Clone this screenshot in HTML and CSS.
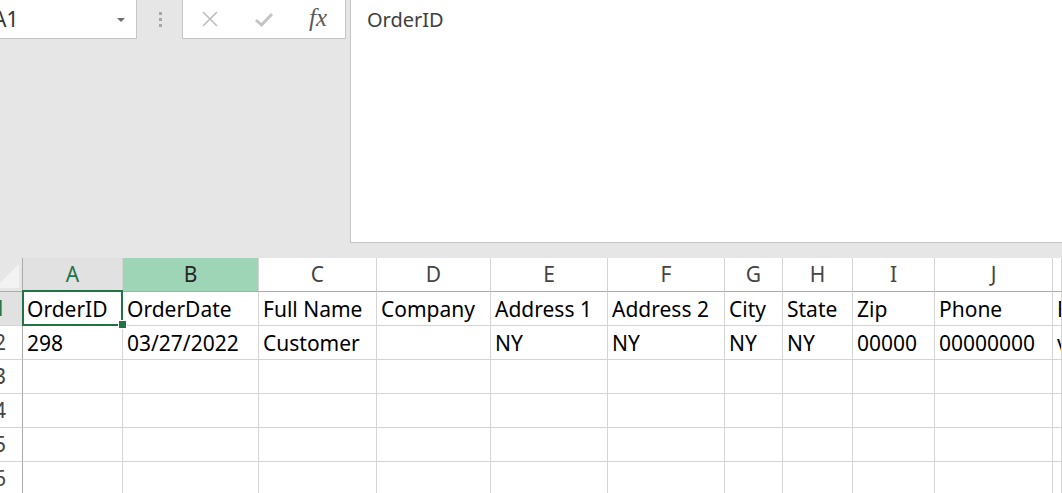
FILE: index.html
```html
<!DOCTYPE html>
<html>
<head>
<meta charset="utf-8">
<link rel="stylesheet" href="styles.css">
</head>
<body>
<div class="app">
  <div class="topbar">
    <div class="namebox">
      <span class="ref">A1</span>
      <span class="dd"></span>
    </div>
    <div class="grip"><i></i><i></i><i></i></div>
    <div class="fbtns">
      <svg class="ico" width="20" height="20" viewBox="0 0 20 20"><path d="M3 3 L17 17 M17 3 L3 17" stroke="#bdbdbd" stroke-width="1.6" fill="none"/></svg>
      <svg class="ico" width="20" height="20" viewBox="0 0 20 20"><path d="M2 11 L7.5 16 L18 5" stroke="#c4c4c4" stroke-width="3" fill="none"/></svg>
      <span class="fx">fx</span>
    </div>
    <div class="fbar">OrderID</div>
  </div>
  <div class="sheet">
    <div class="corner"><span class="tri"></span></div>
    <div class="ch sel">A</div>
    <div class="ch hov">B</div>
    <div class="ch">C</div>
    <div class="ch">D</div>
    <div class="ch">E</div>
    <div class="ch">F</div>
    <div class="ch">G</div>
    <div class="ch">H</div>
    <div class="ch">I</div>
    <div class="ch">J</div>
    <div class="ch"></div>

    <div class="rh sel"><span>1</span></div>
    <div class="c active">OrderID</div>
    <div class="c">OrderDate</div>
    <div class="c">Full Name</div>
    <div class="c">Company</div>
    <div class="c">Address 1</div>
    <div class="c">Address 2</div>
    <div class="c">City</div>
    <div class="c">State</div>
    <div class="c">Zip</div>
    <div class="c">Phone</div>
    <div class="c">Email</div>

    <div class="rh"><span>2</span></div>
    <div class="c">298</div>
    <div class="c">03/27/2022</div>
    <div class="c">Customer</div>
    <div class="c"></div>
    <div class="c">NY</div>
    <div class="c">NY</div>
    <div class="c">NY</div>
    <div class="c">NY</div>
    <div class="c">00000</div>
    <div class="c">00000000</div>
    <div class="c">v</div>

    <div class="rh"><span>3</span></div>
    <div class="c"></div><div class="c"></div><div class="c"></div><div class="c"></div><div class="c"></div><div class="c"></div><div class="c"></div><div class="c"></div><div class="c"></div><div class="c"></div><div class="c"></div>

    <div class="rh"><span>4</span></div>
    <div class="c"></div><div class="c"></div><div class="c"></div><div class="c"></div><div class="c"></div><div class="c"></div><div class="c"></div><div class="c"></div><div class="c"></div><div class="c"></div><div class="c"></div>

    <div class="rh"><span>5</span></div>
    <div class="c"></div><div class="c"></div><div class="c"></div><div class="c"></div><div class="c"></div><div class="c"></div><div class="c"></div><div class="c"></div><div class="c"></div><div class="c"></div><div class="c"></div>

    <div class="rh"><span>6</span></div>
    <div class="c"></div><div class="c"></div><div class="c"></div><div class="c"></div><div class="c"></div><div class="c"></div><div class="c"></div><div class="c"></div><div class="c"></div><div class="c"></div><div class="c"></div>
  </div>
</div>
</body>
</html>
```

FILE: styles.css
```css
* { box-sizing: border-box; }
html, body { margin: 0; padding: 0; }
body {
  width: 1062px;
  height: 493px;
  overflow: hidden;
  background: #ffffff;
  font-family: "Noto Sans", "Noto Sans CJK KR", sans-serif;
}
.app { width: 1062px; height: 493px; overflow: hidden; }

.topbar {
  height: 258px;
  background: #e6e6e6;
  display: flex;
  align-items: flex-start;
}
.namebox {
  width: 137px;
  height: 39px;
  background: #ffffff;
  border-right: 1px solid #c6c6c6;
  border-bottom: 1px solid #c6c6c6;
  display: flex;
  align-items: center;
  justify-content: space-between;
  padding-right: 11px;
}
.ref {
  margin-left: -7px;
  font-size: 21px;
  color: #333333;
  line-height: 38px;
}
.dd {
  width: 0; height: 0;
  border-left: 4px solid transparent;
  border-right: 4px solid transparent;
  border-top: 4px solid #6e6e6e;
  margin-top: 2px;
}
.grip {
  width: 45px;
  height: 39px;
  display: flex;
  flex-direction: column;
  align-items: center;
  justify-content: center;
  gap: 3px;
  padding-left: 1px;
}
.grip i {
  display: block;
  width: 3px;
  height: 3px;
  background: #a6a6a6;
}
.fbtns {
  width: 164px;
  height: 39px;
  background: #ffffff;
  border-left: 1px solid #c6c6c6;
  border-right: 1px solid #c6c6c6;
  border-bottom: 1px solid #c6c6c6;
  display: flex;
  align-items: center;
  padding-left: 17px;
  gap: 34px;
}
.ico { display: block; flex: none; }
.fx {
  font-family: "Liberation Serif", "DejaVu Serif", serif;
  font-style: italic;
  font-size: 25px;
  line-height: 30px;
  color: #5a5a5a;
  margin-left: 1px;
  margin-top: -2px;
}
.fbar {
  margin-left: 4px;
  flex: 1;
  height: 243px;
  background: #ffffff;
  border-left: 1px solid #c6c6c6;
  border-bottom: 1px solid #c6c6c6;
  padding-left: 16px;
  font-size: 20px;
  line-height: 39px;
  color: #404040;
}

.sheet {
  display: grid;
  grid-template-columns: 23px 100px 136px 118px 114px 117px 117px 58px 70px 82px 118px 1fr;
  grid-auto-rows: 34px;
}
.corner {
  background: #e6e6e6;
  border-right: 1px solid #ababab;
  border-bottom: 1px solid #ababab;
  position: relative;
  overflow: hidden;
}
.tri {
  position: absolute;
  right: 3px;
  bottom: 3px;
  width: 0; height: 0;
  border-left: 24px solid transparent;
  border-bottom: 24px solid #f3f3f3;
}
.ch {
  background: #ffffff;
  border-right: 1px solid #d4d4d4;
  border-bottom: 1px solid #ababab;
  text-align: center;
  font-size: 21px;
  line-height: 33px;
  color: #444444;
}
.ch.sel { background: #e1e1e1; color: #217346; }
.ch.hov { background: #9fd5b7; color: #262626; }
.rh {
  background: #ffffff;
  border-right: 1px solid #ababab;
  border-bottom: 1px solid #d4d4d4;
  display: flex;
  justify-content: flex-end;
  padding-right: 16px;
  font-size: 21px;
  line-height: 33px;
  color: #444444;
  overflow: hidden;
}
.rh span { white-space: nowrap; }
.rh.sel { background: #e1e1e1; color: #217346; }
.c {
  border-right: 1px solid #d4d4d4;
  border-bottom: 1px solid #d4d4d4;
  padding-left: 4px;
  font-size: 21px;
  line-height: 34px;
  color: #000000;
  white-space: nowrap;
  overflow: hidden;
}
.c.active {
  position: relative;
  overflow: visible;
}
.c.active::before {
  content: "";
  position: absolute;
  left: -1px;
  top: -2px;
  right: -1px;
  bottom: -1px;
  border: 2px solid #217346;
  z-index: 2;
}
.c.active::after {
  content: "";
  position: absolute;
  right: -5px;
  bottom: -4px;
  width: 7px;
  height: 7px;
  background: #217346;
  border: 1px solid #ffffff;
  z-index: 3;
}
```
